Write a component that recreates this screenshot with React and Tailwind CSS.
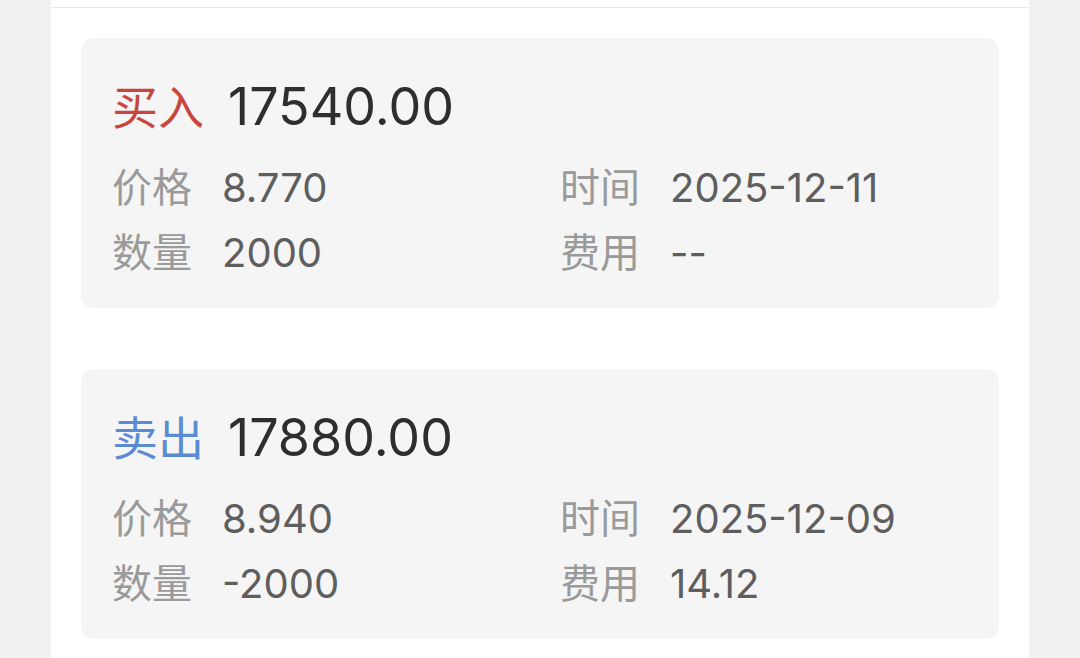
const trades = [
  {
    side: "买入",
    sideColor: "text-[#c8463e]",
    amount: "17540.00",
    price: "8.770",
    time: "2025-12-11",
    qty: "2000",
    fee: "--",
  },
  {
    side: "卖出",
    sideColor: "text-[#5b8bd2]",
    amount: "17880.00",
    price: "8.940",
    time: "2025-12-09",
    qty: "-2000",
    fee: "14.12",
  },
];

function Field({ label, value }) {
  return (
    <div className="flex items-center h-[65px]">
      <span className="w-[110px] shrink-0 text-[40px] text-[#9a9a9a]">{label}</span>
      <span className="text-[40px] text-[#5e5e5e]">{value}</span>
    </div>
  );
}

function TradeCard({ trade }) {
  return (
    <div className="rounded-[13px] bg-[#f5f5f5] px-[31px] pt-[39px] pb-[23px]">
      {/* header: side + amount */}
      <div className="flex items-center h-[60px] mb-[18px]">
        <span className={`text-[46px] ${trade.sideColor}`}>{trade.side}</span>
        <span className="ml-[24px] text-[52px] text-[#2e2e2e]">{trade.amount}</span>
      </div>

      <div className="grid grid-cols-[448px_1fr]">
        <Field label="价格" value={trade.price} />
        <Field label="时间" value={trade.time} />
        <Field label="数量" value={trade.qty} />
        <Field label="费用" value={trade.fee} />
      </div>
    </div>
  );
}

export default function App() {
  return (
    <div
      className="w-[1080px] h-[658px] overflow-hidden bg-[#f1f1f1] flex justify-center"
      style={{ fontFamily: '"Inter", "Noto Sans CJK SC", sans-serif' }}
    >
      <div className="w-[978px] h-full bg-white">
        <div className="h-[8px] border-b border-[#ebebeb]" />
        <div className="px-[30px] pt-[30px] flex flex-col gap-[61px]">
          {trades.map((t) => (
            <TradeCard key={t.amount} trade={t} />
          ))}
        </div>
      </div>
    </div>
  );
}
